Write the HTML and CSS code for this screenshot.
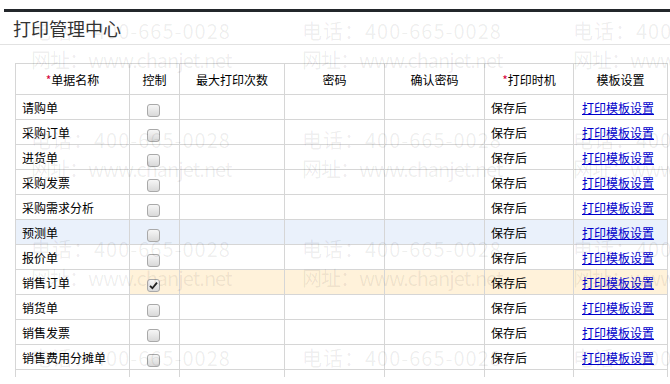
FILE: index.html
```html
<!DOCTYPE html>
<html lang="zh-CN">
<head>
    <meta charset="UTF-8">
    <title>打印管理中心</title>
    <link rel="stylesheet" href="styles.css">
</head>
<body>
    <div class="top-bar"></div>
    <div class="title-bar">打印管理中心</div>
    <div class="content">
        <table class="print-table">
            <colgroup>
                <col class="c-name"><col class="c-ctrl"><col class="c-max"><col class="c-pwd"><col class="c-pwd2"><col class="c-time"><col class="c-tpl">
            </colgroup>
            <thead>
                <tr>
                    <th><span class="req">*</span>单据名称</th>
                    <th>控制</th>
                    <th>最大打印次数</th>
                    <th>密码</th>
                    <th>确认密码</th>
                    <th><span class="req">*</span>打印时机</th>
                    <th>模板设置</th>
                </tr>
            </thead>
            <tbody>
                <tr><td>请购单</td><td class="ctrl"><span class="cb"></span></td><td></td><td></td><td></td><td>保存后</td><td class="tpl"><a href="#">打印模板设置</a></td></tr>
                <tr><td>采购订单</td><td class="ctrl"><span class="cb"></span></td><td></td><td></td><td></td><td>保存后</td><td class="tpl"><a href="#">打印模板设置</a></td></tr>
                <tr><td>进货单</td><td class="ctrl"><span class="cb"></span></td><td></td><td></td><td></td><td>保存后</td><td class="tpl"><a href="#">打印模板设置</a></td></tr>
                <tr><td>采购发票</td><td class="ctrl"><span class="cb"></span></td><td></td><td></td><td></td><td>保存后</td><td class="tpl"><a href="#">打印模板设置</a></td></tr>
                <tr><td>采购需求分析</td><td class="ctrl"><span class="cb"></span></td><td></td><td></td><td></td><td>保存后</td><td class="tpl"><a href="#">打印模板设置</a></td></tr>
                <tr class="row-hover"><td>预测单</td><td class="ctrl"><span class="cb"></span></td><td></td><td></td><td></td><td>保存后</td><td class="tpl"><a href="#">打印模板设置</a></td></tr>
                <tr><td>报价单</td><td class="ctrl"><span class="cb"></span></td><td></td><td></td><td></td><td>保存后</td><td class="tpl"><a href="#">打印模板设置</a></td></tr>
                <tr class="row-edit"><td>销售订单</td><td class="ctrl"><span class="cb checked"><svg width="9" height="9" viewBox="0 0 9 9"><path d="M1 4.8 L3.4 7.2 L8 1.6" fill="none" stroke="#222" stroke-width="1.8"/></svg></span></td><td></td><td></td><td></td><td>保存后</td><td class="tpl"><a href="#">打印模板设置</a></td></tr>
                <tr><td>销货单</td><td class="ctrl"><span class="cb"></span></td><td></td><td></td><td></td><td>保存后</td><td class="tpl"><a href="#">打印模板设置</a></td></tr>
                <tr><td>销售发票</td><td class="ctrl"><span class="cb"></span></td><td></td><td></td><td></td><td>保存后</td><td class="tpl"><a href="#">打印模板设置</a></td></tr>
                <tr><td>销售费用分摊单</td><td class="ctrl"><span class="cb"></span></td><td></td><td></td><td></td><td>保存后</td><td class="tpl"><a href="#">打印模板设置</a></td></tr>
                <tr><td>提货申请单</td><td class="ctrl"><span class="cb"></span></td><td></td><td></td><td></td><td>保存后</td><td class="tpl"><a href="#">打印模板设置</a></td></tr>
            </tbody>
        </table>
    </div>

    <!-- 水印 -->
    <div class="watermark">
        <div class="wm"><div>电话：400-665-0028</div><div class="url">网址：www.chanjet.net</div></div>
        <div class="wm"><div>电话：400-665-0028</div><div class="url">网址：www.chanjet.net</div></div>
        <div class="wm"><div>电话：400-665-0028</div><div class="url">网址：www.chanjet.net</div></div>
        <div class="wm"><div>电话：400-665-0028</div><div class="url">网址：www.chanjet.net</div></div>
        <div class="wm"><div>电话：400-665-0028</div><div class="url">网址：www.chanjet.net</div></div>
        <div class="wm"><div>电话：400-665-0028</div><div class="url">网址：www.chanjet.net</div></div>
        <div class="wm"><div>电话：400-665-0028</div><div class="url">网址：www.chanjet.net</div></div>
        <div class="wm"><div>电话：400-665-0028</div><div class="url">网址：www.chanjet.net</div></div>
        <div class="wm"><div>电话：400-665-0028</div><div class="url">网址：www.chanjet.net</div></div>
        <div class="wm"><div>电话：400-665-0028</div><div class="url">网址：www.chanjet.net</div></div>
        <div class="wm"><div>电话：400-665-0028</div><div class="url">网址：www.chanjet.net</div></div>
        <div class="wm"><div>电话：400-665-0028</div><div class="url">网址：www.chanjet.net</div></div>
    </div>
</body>
</html>
```

FILE: styles.css
```css
body {
    margin: 0;
    width: 670px;
    height: 384px;
    overflow: hidden;
    position: relative;
    background: #fff;
    font-family: "Noto Sans CJK SC", "Liberation Sans", sans-serif;
    color: #000;
}
.top-bar {
    margin: 9px 0 0 4px;
    height: 3px;
    background: #23272b;
}
.title-bar {
    height: 32px;
    line-height: 32px;
    padding-left: 13px;
    border-bottom: 1px solid #e2e2e2;
    font-size: 18px;
    color: #333;
}
.content {
    height: 314px;
    overflow: hidden;
    padding: 18px 0 0 15px;
}
.print-table {
    width: 652px;
    table-layout: fixed;
    border-collapse: collapse;
    font-size: 12px;
}
.c-name { width: 114px; }
.c-ctrl { width: 50px; }
.c-max { width: 105px; }
.c-pwd { width: 100px; }
.c-pwd2 { width: 100px; }
.c-time { width: 89px; }
.c-tpl { width: 94px; }
.print-table th, .print-table td {
    border: 1px solid #d6d6d6;
    padding: 0 6px;
    white-space: nowrap;
    overflow: hidden;
}
.print-table th {
    height: 30px;
    font-weight: normal;
    text-align: center;
}
.print-table td {
    height: 24px;
}
.req {
    color: #d6003a;
}
.ctrl {
    text-align: center;
}
.print-table td.tpl {
    padding-left: 8px;
}
.tpl a {
    color: #0000cc;
    text-decoration: underline;
}
.cb {
    display: inline-block;
    width: 11px;
    height: 11px;
    border: 1px solid #a9a9a9;
    border-radius: 3px;
    background: linear-gradient(#f6f6f6, #d9d9d9);
    vertical-align: middle;
    position: relative;
    top: 1px;
    left: -1px;
}
.cb svg {
    display: block;
    margin: 1px;
}
.row-hover td {
    background: #eaf1fb;
}
.row-edit td {
    background: #fff2da;
}
.row-edit td:first-child {
    background: #fff;
}
.watermark {
    position: absolute;
    left: 31px;
    top: 16px;
    width: 813px;
    height: 361px;
    overflow: hidden;
    display: flex;
    flex-wrap: wrap;
    pointer-events: none;
}
.wm {
    width: 271px;
    height: 109px;
    font-size: 20px;
    line-height: 29px;
    letter-spacing: 1px;
    color: rgba(0, 0, 0, 0.07);
    white-space: nowrap;
}
.wm .url {
    letter-spacing: -1px;
}
```
